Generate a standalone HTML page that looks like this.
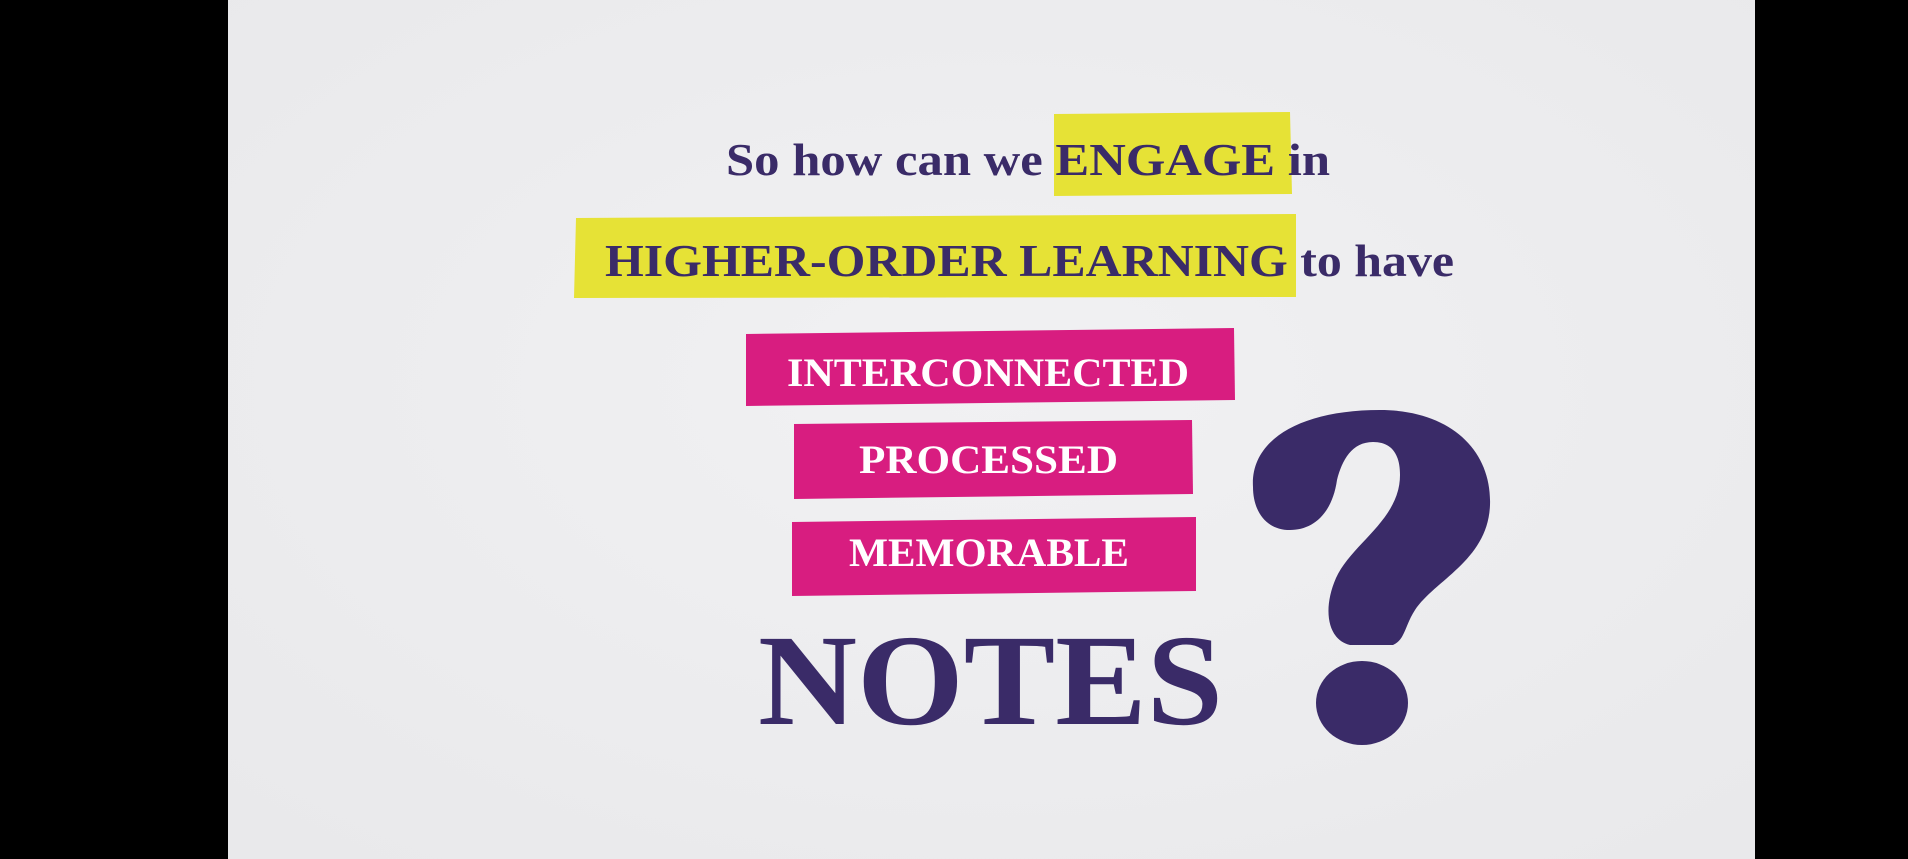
<!DOCTYPE html>
<html><head><meta charset="utf-8"><style>
html,body{margin:0;padding:0;background:#000;width:1908px;height:859px;overflow:hidden}
svg{display:block}
text{font-family:"Liberation Serif",serif;font-weight:bold}
</style></head><body>
<svg width="1908" height="859" viewBox="0 0 1908 859">
<defs>
<radialGradient id="bg" cx="50%" cy="45%" r="70%">
<stop offset="0" stop-color="#f1f1f3"/><stop offset="1" stop-color="#e9e9eb"/>
</radialGradient>
</defs>
<rect x="228" y="0" width="1527" height="859" fill="url(#bg)"/>
<path d="M1054,114 L1290,112 L1292,194 L1054,196 Z" fill="#e6e236"/>
<path d="M576,218 L1296,214 L1296,297 L574,298 Z" fill="#e6e236"/>
<path d="M746,334 L1234,328 L1235,400 L746,406 Z" fill="#d81d80"/>
<path d="M794,424 L1192,420 L1193,494 L794,499 Z" fill="#d81d80"/>
<path d="M792,522 L1196,517 L1196,591 L792,596 Z" fill="#d81d80"/>
<g fill="#3a2b68">
<text x="726" y="175" font-size="46" textLength="604" lengthAdjust="spacingAndGlyphs">So how can we ENGAGE in</text>
<text x="605" y="276" font-size="46" textLength="849" lengthAdjust="spacingAndGlyphs">HIGHER-ORDER LEARNING to have</text>
<text x="758" y="724" font-size="130" textLength="465" lengthAdjust="spacingAndGlyphs">NOTES</text>
<path d="M1253,487 C1250,440 1300,410 1380,410 C1450,410 1492,450 1490,505 C1488,560 1435,580 1415,610 C1405,625 1405,640 1393,645 L1350,645 C1328,640 1322,610 1336,578 C1352,543 1400,520 1400,475 C1400,452 1390,442 1373,442 C1352,442 1342,460 1337,480 C1332,515 1312,530 1290,530 C1265,530 1253,510 1253,487 Z"/>
<ellipse cx="1362" cy="703" rx="46" ry="42"/>
</g>
<g fill="#ffffff">
<text x="787" y="386" font-size="40" textLength="402" lengthAdjust="spacingAndGlyphs">INTERCONNECTED</text>
<text x="859" y="473" font-size="40" textLength="259" lengthAdjust="spacingAndGlyphs">PROCESSED</text>
<text x="849" y="566" font-size="40" textLength="280" lengthAdjust="spacingAndGlyphs">MEMORABLE</text>
</g>
</svg>
</body></html>
